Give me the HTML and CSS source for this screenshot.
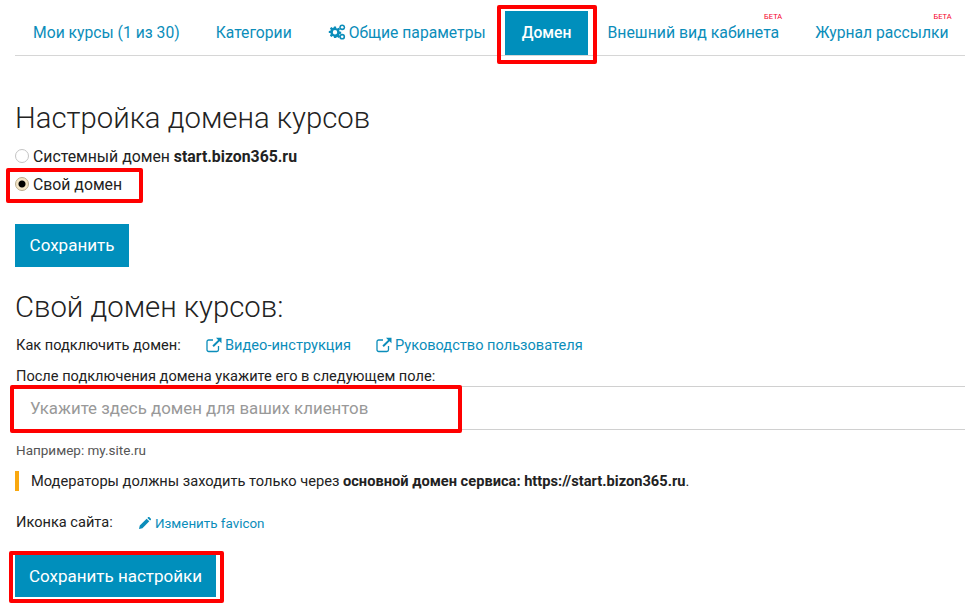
FILE: index.html
```html
<!DOCTYPE html>
<html lang="ru">
<head>
<meta charset="utf-8">
<title>Домен</title>
<link rel="stylesheet" href="styles.css">
</head>
<body>
<main class="page">
  <nav class="tabs">
    <a class="tab">Мои курсы (1 из 30)</a>
    <a class="tab">Категории</a>
    <a class="tab"><svg class="ico-cogs" viewBox="0 0 18 16"><g fill="#0b8dba"><path fill-rule="evenodd" d="M6 2.6h2l.3 1.6 1 .4 1.4-.9 1.4 1.4-.9 1.4.4 1 1.6.3v2l-1.6.3-.4 1 .9 1.4-1.4 1.4-1.4-.9-1 .4L8 14H6l-.3-1.6-1-.4-1.4.9-1.4-1.4.9-1.4-.4-1L.8 9.1v-2l1.6-.3.4-1-.9-1.4 1.4-1.4 1.4.9 1-.4zM7 6a2.2 2.2 0 1 0 0 4.400a2.200 2.200 0 0 0 0-4.400z"/><circle cx="14.200" cy="3.300" r="2.900"/><circle cx="14.200" cy="12.700" r="2.900"/></g><circle cx="14.200" cy="3.300" r="1.300" fill="#fff"/><circle cx="14.200" cy="12.700" r="1.300" fill="#fff"/></svg>Общие параметры</a>
    <a class="tab tab-active">Домен</a>
    <a class="tab tab-look">Внешний вид кабинета<sup class="beta">БЕТА</sup></a>
    <a class="tab">Журнал рассылки<sup class="beta">БЕТА</sup></a>
    <span class="mark mark-tab"></span>
  </nav>

  <h1 class="title">Настройка домена курсов</h1>
  <div class="radios">
    <label class="radio-row"><span class="radio"></span>Системный домен <b>start.bizon365.ru</b></label>
    <label class="radio-row"><span class="radio radio-on"></span>Свой домен<span class="mark mark-radio"></span></label>
  </div>
  <button class="btn btn-save">Сохранить</button>

  <h2 class="title title-second">Свой домен курсов:</h2>
  <div class="howto">
    <span class="howto-label">Как подключить домен:</span>
    <a class="link"><svg class="ico" viewBox="0 0 16 16"><path fill="none" stroke="#0b8dba" stroke-width="1.300" d="M12.500 9v3.800a1.700 1.700 0 0 1-1.700 1.700H2.700A1.700 1.700 0 0 1 1 12.800V4.700A1.700 1.700 0 0 1 2.700 3H7"/><path fill="#0b8dba" d="M10 .8h5.500v5.500l-2-2-5.700 5.700-1.400-1.400 5.700-5.700z"/></svg>Видео-инструкция</a>
    <a class="link"><svg class="ico" viewBox="0 0 16 16"><path fill="none" stroke="#0b8dba" stroke-width="1.300" d="M12.500 9v3.800a1.700 1.700 0 0 1-1.700 1.700H2.700A1.700 1.700 0 0 1 1 12.800V4.700A1.700 1.700 0 0 1 2.700 3H7"/><path fill="#0b8dba" d="M10 .8h5.500v5.500l-2-2-5.700 5.700-1.400-1.400 5.700-5.700z"/></svg>Руководство пользователя</a>
  </div>
  <label class="field-label">После подключения домена укажите его в следующем поле:</label>
  <div class="field">
    <input class="input" type="text" placeholder="Укажите здесь домен для ваших клиентов">
    <span class="mark mark-input"></span>
  </div>
  <p class="hint">Например: my.site.ru</p>
  <p class="note">Модераторы должны заходить только через <b>основной домен сервиса: https://start.bizon365.ru</b>.</p>
  <div class="favicon">
    <span class="favicon-label">Иконка сайта:</span>
    <a class="link"><svg class="ico-pen" viewBox="0 0 14 14"><path fill="#0b8dba" d="M0 14l.9-4 8-8 3.100 3.100-8 8zM9.800 1.100l1-1a.8.8 0 0 1 1.100 0l2 2a.8.8 0 0 1 0 1.100l-1 1z"/></svg>Изменить favicon</a>
  </div>
  <div class="save-wrap">
    <button class="btn btn-settings">Сохранить настройки</button>
    <span class="mark mark-settings"></span>
  </div>
</main>
</body>
</html>
```
FILE: styles.css
```css
* { box-sizing: border-box; }
html, body { margin: 0; background: #fff; overflow: hidden; }
body { width: 965px; height: 607px; font-family: Roboto, sans-serif; font-size: 14.600px; color: #222; }
.page { position: relative; padding-left: 15px; height: 607px; }
.tabs { display: flex; height: 56px; padding-top: 11px; border-bottom: 1px solid #d6d6d6; }
.tab { display: flex; align-items: center; height: 44px; padding: 0 18px 2px; font-size: 15.700px; color: #0b8dba; position: relative; white-space: nowrap; }
.tab-active { background: #008fbc; color: #fff; font-weight: 500; padding: 0 17px 2px; margin: 0 1px; }
.tab-look { font-size: 15.850px; }
.beta { position: absolute; top: 2px; right: 15px; font-size: 7.500px; line-height: 8px; color: #f5002a; }
.ico-cogs { width: 18px; height: 16px; margin-right: 3px; }
.mark { position: absolute; border: 4px solid #f00; border-radius: 2px; pointer-events: none; }
.mark-tab { left: 497px; top: 5px; width: 100px; height: 59px; }
.title { margin: 0; font-weight: 300; font-size: 29.300px; line-height: 34px; color: #222; }
.title:first-of-type { margin-top: 45px; }
.radios { margin-top: 7px; }
.radio-row { display: flex; align-items: center; height: 28px; font-size: 15.800px; white-space: pre; }
.radio-row b { font-weight: 700; }
.radio { width: 14px; height: 14px; margin-right: 4px; border-radius: 50%; border: 1px solid #c4c4c4; background: #fff; }
.radio-on { border-color: #b9ac8e; background: radial-gradient(circle, #000 0 3px, #f3e5c6 4px); }
.mark-radio { left: 6px; top: 168px; width: 137px; height: 35px; }
.btn { display: block; border: 0; background: #008fbc; color: #fff; font-family: Roboto, sans-serif; font-weight: 400; font-size: 17px; }
.btn-save { width: 114px; height: 43px; margin-top: 26px; padding: 0 0 2px; }
.title.title-second { margin-top: 23px; }
.howto { display: flex; height: 20px; align-items: center; margin-top: 11px; }
.howto-label { width: 190px; margin-left: 1px; }
.howto .link:first-of-type { margin-right: 25px; }
.link { display: inline-flex; align-items: center; font-size: 14.600px; color: #0b8dba; }
.ico { width: 16px; height: 16px; margin-right: 3px; }
.ico-pen { width: 12px; height: 12px; margin-right: 4px; }
.field-label { display: block; margin: 13px 0 0 1px; height: 17px; line-height: 17px; white-space: nowrap; }
.field { margin-top: 1px; }
.input { display: block; width: 950px; height: 44px; border: 1px solid #d0d0d0; border-width: 1px 0; padding: 0 15px; font-family: Roboto, sans-serif; font-size: 16.850px; outline: 0; }
.input::placeholder { color: #999; opacity: 1; }
.mark-input { left: 10px; top: 385px; width: 452px; height: 48px; }
.hint { margin: 12px 0 0 1px; font-size: 13.500px; line-height: 17px; color: #555; }
.note { margin: 12px 0 0; padding-left: 12px; border-left: 4px solid #f9a80f; font-size: 14.650px; line-height: 20px; color: #222; }
.favicon { display: flex; align-items: center; margin-top: 21px; height: 20px; }
.favicon-label { width: 123px; margin-left: 1px; }
.favicon .link { font-size: 13.400px; margin-top: 2px; }
.save-wrap { margin-top: 22px; }
.btn-settings { width: 201px; height: 43px; }
.mark-settings { left: 9px; top: 551px; width: 215px; height: 52px; }
```
